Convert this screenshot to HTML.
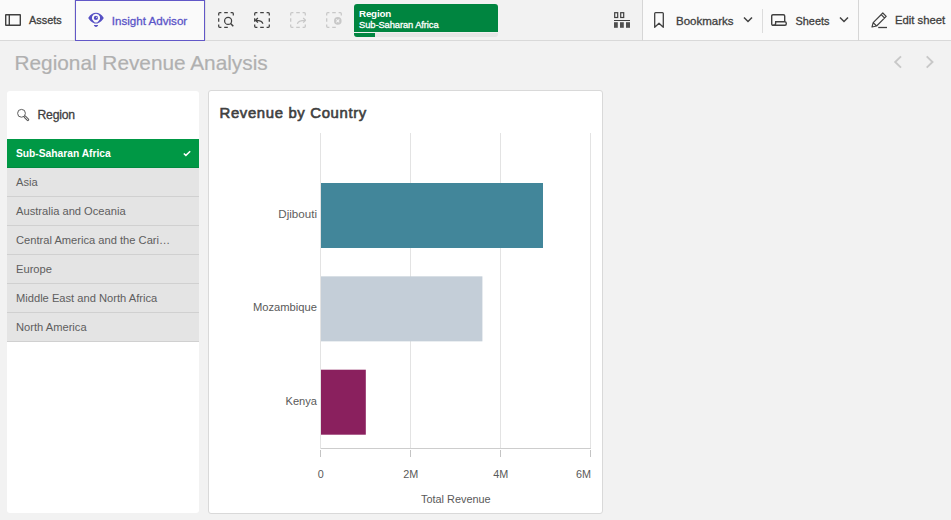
<!DOCTYPE html>
<html><head><meta charset="utf-8"><style>
html,body{margin:0;padding:0;}
body{width:951px;height:520px;position:relative;overflow:hidden;background:#f2f2f2;font-family:"Liberation Sans",sans-serif;}
.a{position:absolute;display:block;}
.t{position:absolute;white-space:nowrap;line-height:1;}
</style></head><body>
<div class="a" style="left:0px;top:0px;width:205px;height:40px;background:#fafafa"></div>
<div class="a" style="left:205px;top:0px;width:437px;height:40px;background:#f2f2f2"></div>
<div class="a" style="left:643px;top:0px;width:308px;height:40px;background:#fafafa"></div>
<div class="a" style="left:0px;top:40px;width:951px;height:1px;background:#d9d9d9"></div>
<div class="a" style="left:642px;top:0px;width:1px;height:41px;background:#d6d6d6"></div>
<div class="a" style="left:205px;top:0px;width:1px;height:40px;background:#e2e2e2"></div>
<div class="a" style="left:858px;top:0px;width:1px;height:41px;background:#d6d6d6"></div>
<div class="a" style="left:762px;top:9px;width:1px;height:24px;background:#dcdcdc"></div>
<svg class="a" style="left:5px;top:14px" width="16" height="12" viewBox="0 0 16 12" fill="none"><rect x="0.7" y="0.7" width="14.6" height="10.6" rx="0.3" stroke="#404040" stroke-width="1.4"/><line x1="4.3" y1="0.5" x2="4.3" y2="11.5" stroke="#404040" stroke-width="1.4"/></svg>
<div class="t" style="left:29px;top:14.87px;font-size:10.9px;color:#404040;font-weight:400;-webkit-text-stroke:0.3px currentColor;">Assets</div>
<div class="a" style="left:74px;top:0px;width:1px;height:40px;background:#e8e8e8"></div>
<div class="a" style="left:75px;top:0px;width:130px;height:41px;border:1px solid #6258c8;box-sizing:border-box;background:#fafafa"></div>
<svg class="a" style="left:88px;top:12px" width="16" height="16" viewBox="0 0 16 16" fill="none"><path d="M0.2 5.9 C2.5 2.3 5.2 0.85 8 0.85 C10.8 0.85 13.5 2.3 15.8 5.9 C14.2 8.6 12.2 10.2 10.4 10.9 L9.5 11.6 H6.5 L5.6 10.9 C3.8 10.2 1.8 8.6 0.2 5.9 Z" fill="#5650c4"/><path d="M8 1.8 A4.1 4.1 0 0 1 10.6 9.1 L9.2 10.5 H6.8 L5.4 9.1 A4.1 4.1 0 0 1 8 1.8 Z" fill="#fafafa"/><circle cx="7.9" cy="5.9" r="2.1" fill="#5650c4"/><circle cx="8.6" cy="5.2" r="0.55" fill="#fafafa"/><path d="M5.9 13.1 H10.1 C10.1 14.2 9 14.9 8 14.9 C7 14.9 5.9 14.2 5.9 13.1 Z" fill="#5650c4"/></svg>
<div class="t" style="left:111.8px;top:15.48px;font-size:11.6px;color:#5b55c8;font-weight:400;-webkit-text-stroke:0.3px currentColor;">Insight Advisor</div>
<svg class="a" style="left:218px;top:12px" width="16" height="16" viewBox="0 0 16 16" fill="none"><path d="M0.7 3.4 V1.7 Q0.7 0.7 1.7 0.7 H3.4 M6.2 0.7 H9.8 M12.6 0.7 H14.3 Q15.3 0.7 15.3 1.7 V3.4 M9.8 15.3 H6.2 M3.4 15.3 H1.7 Q0.7 15.3 0.7 14.3 V12.6 M0.7 9.8 V6.2" stroke="#404040" stroke-width="1.25"/><circle cx="10.1" cy="8.9" r="3.5" stroke="#404040" stroke-width="1.25"/><line x1="12.6" y1="11.4" x2="15.3" y2="14.2" stroke="#404040" stroke-width="1.5"/></svg>
<svg class="a" style="left:254px;top:12px" width="16" height="16" viewBox="0 0 16 16" fill="none"><path d="M0.7 3.4 V1.7 Q0.7 0.7 1.7 0.7 H3.4 M6.2 0.7 H9.8 M12.6 0.7 H14.3 Q15.3 0.7 15.3 1.7 V3.4 M15.3 6.2 V9.8 M15.3 12.6 V14.3 Q15.3 15.3 14.3 15.3 H12.6 M9.8 15.3 H6.2 M3.4 15.3 H1.7 Q0.7 15.3 0.7 14.3 V12.6 M0.7 9.8 V6.2" stroke="#404040" stroke-width="1.25" stroke-linecap="butt"/><path d="M8.8 11.8 C8.6 9.4 7 8.3 1.6 8.3 M3.9 6 L1.5 8.3 L3.9 10.6" stroke="#404040" stroke-width="1.3"/></svg>
<svg class="a" style="left:290px;top:12px" width="16" height="16" viewBox="0 0 16 16" fill="none"><path d="M0.7 3.4 V1.7 Q0.7 0.7 1.7 0.7 H3.4 M6.2 0.7 H9.8 M12.6 0.7 H14.3 Q15.3 0.7 15.3 1.7 V3.4 M15.3 12.6 V14.3 Q15.3 15.3 14.3 15.3 H12.6 M9.8 15.3 H6.2 M3.4 15.3 H1.7 Q0.7 15.3 0.7 14.3 V12.6 M0.7 9.8 V6.2" stroke="#c8c8c8" stroke-width="1.25"/><path d="M7.4 11.8 C7.8 9.4 9.4 8.3 15.4 8.3 M13.2 6 L15.6 8.3 L13.2 10.6" stroke="#c8c8c8" stroke-width="1.2"/></svg>
<svg class="a" style="left:326px;top:12px" width="16" height="16" viewBox="0 0 16 16" fill="none"><path d="M0.7 3.4 V1.7 Q0.7 0.7 1.7 0.7 H3.4 M6.2 0.7 H9.8 M12.6 0.7 H14.3 Q15.3 0.7 15.3 1.7 V3.4 M9.8 15.3 H6.2 M3.4 15.3 H1.7 Q0.7 15.3 0.7 14.3 V12.6 M0.7 9.8 V6.2" stroke="#c8c8c8" stroke-width="1.25"/><circle cx="11.8" cy="8.9" r="3.8" fill="#c8c8c8"/><path d="M10.3 7.4 L13.3 10.4 M13.3 7.4 L10.3 10.4" stroke="#f2f2f2" stroke-width="1.1"/></svg>
<div class="a" style="left:354px;top:4px;width:144px;height:33px;border-radius:3px;overflow:hidden;background:#f0f0f0"><div class="a" style="left:0;top:0;width:144px;height:28px;background:#008540"></div><div class="a" style="left:0;top:29px;width:144px;height:4px;background:#e6e6e6"></div><div class="a" style="left:0;top:29px;width:21px;height:4px;background:#008540"></div></div>
<div class="t" style="left:359px;top:9.20px;font-size:9.8px;color:#fff;font-weight:700;letter-spacing:-0.2px;">Region</div>
<div class="t" style="left:359px;top:20.14px;font-size:9.4px;color:#fff;font-weight:400;letter-spacing:-0.1px;-webkit-text-stroke:0.3px currentColor;">Sub-Saharan Africa</div>
<svg class="a" style="left:613px;top:12px" width="18" height="16" viewBox="0 0 18 16" fill="none"><rect x="1.7" y="0.7" width="3" height="4.8" stroke="#404040" stroke-width="1.2"/><rect x="7.7" y="0.7" width="3" height="4.8" stroke="#404040" stroke-width="1.2"/><rect x="1" y="8" width="16" height="1" fill="#404040"/><rect x="1" y="10.2" width="3.8" height="5.6" fill="#505050"/><rect x="7" y="10.2" width="3.8" height="5.6" fill="#505050"/><rect x="13" y="10.2" width="4" height="5.6" fill="#505050"/></svg>
<svg class="a" style="left:654px;top:12px" width="10" height="16" viewBox="0 0 10 16" fill="none"><path d="M0.7 15.3 V1.6 Q0.7 0.7 1.6 0.7 H8.4 Q9.3 0.7 9.3 1.6 V15.3 L5 11.3 Z" stroke="#404040" stroke-width="1.3" stroke-linejoin="round"/></svg>
<div class="t" style="left:676px;top:15.87px;font-size:11.5px;color:#404040;font-weight:400;-webkit-text-stroke:0.3px currentColor;">Bookmarks</div>
<svg class="a" style="left:743px;top:16px" width="10" height="8" viewBox="0 0 10 8" fill="none"><path d="M1 1.5 L5 5.5 L9 1.5" stroke="#404040" stroke-width="1.5"/></svg>
<svg class="a" style="left:771px;top:14px" width="16" height="12" viewBox="0 0 16 12" fill="none"><path d="M3 11.3 H2.3 Q0.7 11.3 0.7 9.7 V2 Q0.7 0.7 2 0.7 H12.4 Q13.7 0.7 13.7 2 V7.3" stroke="#404040" stroke-width="1.4"/><path d="M4.7 7.7 H14 Q15.3 7.7 15.3 9.5 Q15.3 11.3 14 11.3 H2.3 Q4.6 11.3 4.6 9.5 Z" stroke="#404040" stroke-width="1.4"/></svg>
<div class="t" style="left:795.5px;top:15.77px;font-size:10.9px;color:#404040;font-weight:400;-webkit-text-stroke:0.3px currentColor;">Sheets</div>
<svg class="a" style="left:839px;top:16px" width="10" height="8" viewBox="0 0 10 8" fill="none"><path d="M1 1.5 L5 5.5 L9 1.5" stroke="#404040" stroke-width="1.5"/></svg>
<svg class="a" style="left:871px;top:12px" width="17" height="17" viewBox="0 0 17 17" fill="none"><path d="M1 15 L2.2 10.6 L11.8 1 L15.2 4.4 L5.6 14 Z M2.2 10.6 L5.6 14 M10.2 2.6 L13.6 6" stroke="#404040" stroke-width="1.2" stroke-linejoin="round"/><line x1="7.2" y1="15.5" x2="16" y2="15.5" stroke="#404040" stroke-width="1.3"/></svg>
<div class="t" style="left:895px;top:14.73px;font-size:11.3px;color:#404040;font-weight:400;-webkit-text-stroke:0.3px currentColor;">Edit sheet</div>
<div class="t" style="left:14.5px;top:53.39px;font-size:20.8px;color:#b0b0b0;font-weight:400;-webkit-text-stroke:0.2px #b0b0b0;">Regional Revenue Analysis</div>
<svg class="a" style="left:893px;top:55px" width="10" height="14" viewBox="0 0 10 14" fill="none"><path d="M8 1.4 L2.2 7 L8 12.6" stroke="#c8c8c8" stroke-width="1.9"/></svg>
<svg class="a" style="left:925px;top:55px" width="10" height="14" viewBox="0 0 10 14" fill="none"><path d="M1.7 1.4 L7.5 7 L1.7 12.6" stroke="#c8c8c8" stroke-width="1.9"/></svg>
<div class="a" style="left:7px;top:91px;width:192px;height:422px;background:#fff;border-radius:3px"></div>
<svg class="a" style="left:16px;top:108px" width="14" height="14" viewBox="0 0 14 14" fill="none"><circle cx="5.5" cy="5.3" r="3.9" stroke="#5e5e5e" stroke-width="1"/><line x1="8.9" y1="8.7" x2="11.9" y2="11.7" stroke="#5e5e5e" stroke-width="2.7" stroke-linecap="round"/><line x1="8.9" y1="8.7" x2="11.9" y2="11.7" stroke="#fff" stroke-width="0.9" stroke-linecap="round"/></svg>
<div class="t" style="left:37.5px;top:109.27px;font-size:12.2px;color:#404040;font-weight:400;letter-spacing:-0.2px;-webkit-text-stroke:0.3px currentColor;">Region</div>
<div class="a" style="left:7px;top:139px;width:192px;height:29px;background:#009845;border-bottom:1px solid #008a3f;box-sizing:border-box"></div>
<div class="t" style="left:16px;top:149.02px;font-size:10.25px;color:#fff;font-weight:700;">Sub-Saharan Africa</div>
<svg class="a" style="left:182px;top:149px" width="10" height="8" viewBox="0 0 10 8" fill="none"><path d="M1.8 4.5 L3.9 6.4 L8.2 2.3" stroke="#fff" stroke-width="1.5"/></svg>
<div class="a" style="left:7px;top:168px;width:192px;height:29px;background:#e4e4e4;border-bottom:1px solid #d0d0d0;box-sizing:border-box"></div>
<div class="t" style="left:16px;top:176.86px;font-size:11.15px;color:#5e5e5e;font-weight:400;">Asia</div>
<div class="a" style="left:7px;top:197px;width:192px;height:29px;background:#e4e4e4;border-bottom:1px solid #d0d0d0;box-sizing:border-box"></div>
<div class="t" style="left:16px;top:205.86px;font-size:11.15px;color:#5e5e5e;font-weight:400;">Australia and Oceania</div>
<div class="a" style="left:7px;top:226px;width:192px;height:29px;background:#e4e4e4;border-bottom:1px solid #d0d0d0;box-sizing:border-box"></div>
<div class="t" style="left:16px;top:234.86px;font-size:11.15px;color:#5e5e5e;font-weight:400;">Central America and the Cari…</div>
<div class="a" style="left:7px;top:255px;width:192px;height:29px;background:#e4e4e4;border-bottom:1px solid #d0d0d0;box-sizing:border-box"></div>
<div class="t" style="left:16px;top:263.86px;font-size:11.15px;color:#5e5e5e;font-weight:400;">Europe</div>
<div class="a" style="left:7px;top:284px;width:192px;height:29px;background:#e4e4e4;border-bottom:1px solid #d0d0d0;box-sizing:border-box"></div>
<div class="t" style="left:16px;top:292.86px;font-size:11.15px;color:#5e5e5e;font-weight:400;">Middle East and North Africa</div>
<div class="a" style="left:7px;top:313px;width:192px;height:29px;background:#e4e4e4;border-bottom:1px solid #d0d0d0;box-sizing:border-box"></div>
<div class="t" style="left:16px;top:321.86px;font-size:11.15px;color:#5e5e5e;font-weight:400;">North America</div>
<div class="a" style="left:208px;top:90px;width:395px;height:424px;background:#fff;border:1px solid #d9d9d9;border-radius:3px;box-sizing:border-box"></div>
<div class="t" style="left:219.5px;top:105.99px;font-size:14.9px;color:#404040;font-weight:400;letter-spacing:0.65px;-webkit-text-stroke:0.6px #404040;">Revenue by Country</div>
<div class="a" style="left:320px;top:133px;width:1px;height:316px;background:#e3e3e3"></div>
<div class="a" style="left:320px;top:450px;width:1px;height:7px;background:#c4c4c4"></div>
<div class="a" style="left:410px;top:133px;width:1px;height:316px;background:#e3e3e3"></div>
<div class="a" style="left:410px;top:450px;width:1px;height:7px;background:#c4c4c4"></div>
<div class="a" style="left:500px;top:133px;width:1px;height:316px;background:#e3e3e3"></div>
<div class="a" style="left:500px;top:450px;width:1px;height:7px;background:#c4c4c4"></div>
<div class="a" style="left:590px;top:133px;width:1px;height:316px;background:#e3e3e3"></div>
<div class="a" style="left:590px;top:450px;width:1px;height:7px;background:#c4c4c4"></div>
<div class="a" style="left:321px;top:448px;width:270px;height:1px;background:#cdcdcd"></div>
<svg class="a" style="left:300px;top:170px" width="260" height="280" viewBox="0 0 260 280" fill="none"><rect x="21" y="13" width="222" height="65" fill="#42869a"/><rect x="21" y="106.35" width="161.4" height="65" fill="#c4ced8"/><rect x="21" y="199.7" width="44.8" height="65" fill="#8a205e"/></svg>
<div class="t" style="right:634px;top:208.18px;font-size:11.6px;color:#5e5e5e;font-weight:400;text-align:right;">Djibouti</div>
<div class="t" style="right:634px;top:302.02px;font-size:11.2px;color:#595959;font-weight:400;text-align:right;">Mozambique</div>
<div class="t" style="right:634px;top:395.60px;font-size:11.1px;color:#595959;font-weight:400;text-align:right;">Kenya</div>
<div class="t" style="left:270.8px;width:100px;top:468.86px;font-size:10.8px;color:#595959;font-weight:400;text-align:center;">0</div>
<div class="t" style="left:360.7px;width:100px;top:468.86px;font-size:10.8px;color:#595959;font-weight:400;text-align:center;">2M</div>
<div class="t" style="left:450.7px;width:100px;top:468.86px;font-size:10.8px;color:#595959;font-weight:400;text-align:center;">4M</div>
<div class="t" style="right:360px;top:468.86px;font-size:10.8px;color:#595959;font-weight:400;text-align:right;">6M</div>
<div class="t" style="left:421px;top:493.77px;font-size:10.9px;color:#595959;font-weight:400;">Total Revenue</div>
</body></html>
